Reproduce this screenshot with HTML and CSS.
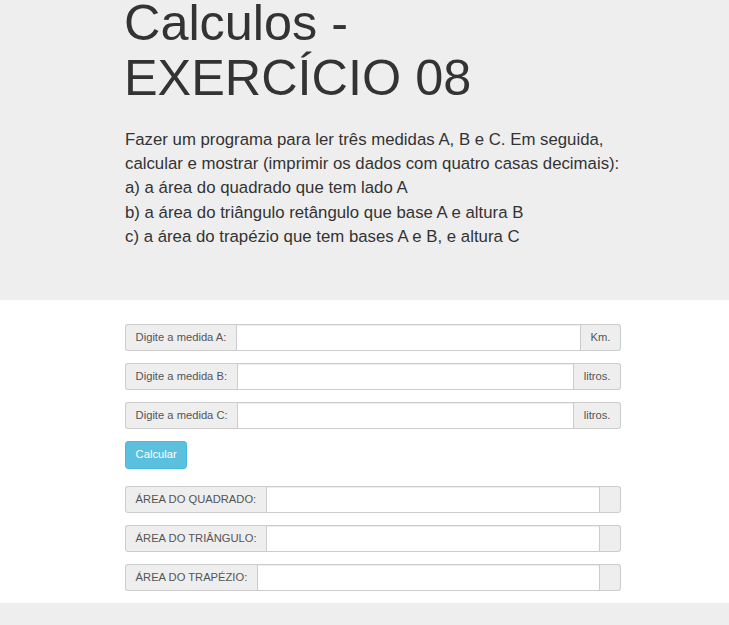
FILE: index.html
```html
<!DOCTYPE html>
<html lang="pt-BR">
<head>
<meta charset="utf-8">
<title>Calculos - EXERCÍCIO 08</title>
<link rel="stylesheet" href="styles.css">
</head>
<body>
<div class="jumbotron">
  <div class="container">
    <h1>Calculos - EXERCÍCIO 08</h1>
    <p>Fazer um programa para ler três medidas A, B e C. Em seguida,<br>calcular e mostrar (imprimir os dados com quatro casas decimais):<br>a) a área do quadrado que tem lado A<br>b) a área do triângulo retângulo que base A e altura B<br>c) a área do trapézio que tem bases A e B, e altura C</p>
  </div>
</div>
<div class="container form">
  <div class="input-group">
    <span class="addon addon-left">Digite a medida A:</span>
    <input class="form-control" type="text">
    <span class="addon addon-right">Km.</span>
  </div>
  <div class="input-group">
    <span class="addon addon-left">Digite a medida B:</span>
    <input class="form-control" type="text">
    <span class="addon addon-right">litros.</span>
  </div>
  <div class="input-group">
    <span class="addon addon-left">Digite a medida C:</span>
    <input class="form-control" type="text">
    <span class="addon addon-right">litros.</span>
  </div>
  <div class="actions">
    <button class="btn-info" type="button">Calcular</button>
  </div>
  <div class="input-group">
    <span class="addon addon-left">ÁREA DO QUADRADO:</span>
    <input class="form-control" type="text">
    <span class="addon addon-right addon-empty"></span>
  </div>
  <div class="input-group">
    <span class="addon addon-left">ÁREA DO TRIÂNGULO:</span>
    <input class="form-control" type="text">
    <span class="addon addon-right addon-empty"></span>
  </div>
  <div class="input-group">
    <span class="addon addon-left">ÁREA DO TRAPÉZIO:</span>
    <input class="form-control" type="text">
    <span class="addon addon-right addon-empty"></span>
  </div>
</div>
<div class="footer">
  <div class="footer-edge">
    <span class="edge edge-a"></span>
    <span class="edge edge-b"></span>
    <span class="edge edge-c"></span>
    <span class="edge edge-d"></span>
    <span class="edge edge-e"></span>
  </div>
</div>
</body>
</html>
```
FILE: styles.css
```css
* {
  box-sizing: border-box;
}

html, body {
  margin: 0;
  padding: 0;
  overflow: hidden;
}

body {
  font-family: "Liberation Sans", Arial, Helvetica, sans-serif;
  font-size: 11.2px;
  line-height: 1.42857;
  color: #333;
  background: #fff;
}

.container {
  width: 496px;
  margin-left: 125px;
}

.jumbotron {
  height: 300px;
  background: #eee;
  overflow: hidden;
}

.jumbotron h1 {
  margin: -5px 0 0 -1px;
  font-size: 50.4px;
  line-height: 55px;
  font-weight: 400;
  color: #333;
}

.jumbotron p {
  margin: 23px 0 12px;
  font-size: 16.8px;
  line-height: 24.2px;
  font-weight: 400;
  white-space: nowrap;
}

.form {
  padding-top: 24px;
}

.input-group {
  display: flex;
  height: 27px;
  margin-bottom: 12px;
}

.addon {
  display: flex;
  align-items: center;
  padding: 0 9.6px;
  background: #eee;
  border: 1px solid #ccc;
  color: #555;
  font-size: 11.2px;
  line-height: 1;
  white-space: nowrap;
}

.addon-left {
  border-right: 0;
  border-radius: 3.2px 0 0 3.2px;
}

.addon-right {
  border-left: 0;
  border-radius: 0 3.2px 3.2px 0;
}

.addon-empty {
  width: 21px;
  padding: 0;
}

.form-control {
  flex: 1;
  min-width: 0;
  height: 27px;
  margin: 0;
  padding: 0 9.6px;
  border: 1px solid #ccc;
  border-radius: 0;
  background: #fff;
  box-shadow: inset 0 1px 1px rgba(0, 0, 0, 0.075);
  font-family: inherit;
  font-size: 11.2px;
  color: #555;
}

.actions {
  padding-bottom: 17.5px;
}

.btn-info {
  display: block;
  height: 27.5px;
  margin: 0;
  padding: 0 9.6px;
  border: 1px solid #46b8da;
  border-radius: 3.2px;
  background: #5bc0de;
  color: #fff;
  font-family: inherit;
  font-size: 11.2px;
  line-height: 1;
  cursor: pointer;
}

.footer {
  height: 23px;
  padding-top: 22px;
  background: #eee;
}

.footer-edge {
  display: flex;
  height: 1px;
}

.edge {
  display: block;
  height: 1px;
}

.edge-a {
  width: 90px;
  background: #c8c8c8;
}

.edge-b {
  width: 101px;
  background: #d6d6d6;
}

.edge-c {
  width: 44px;
  background: #ececec;
}

.edge-d {
  width: 2px;
  background: #b5b5b5;
}

.edge-e {
  flex: 1;
  background: #d0d0d0;
}
```
